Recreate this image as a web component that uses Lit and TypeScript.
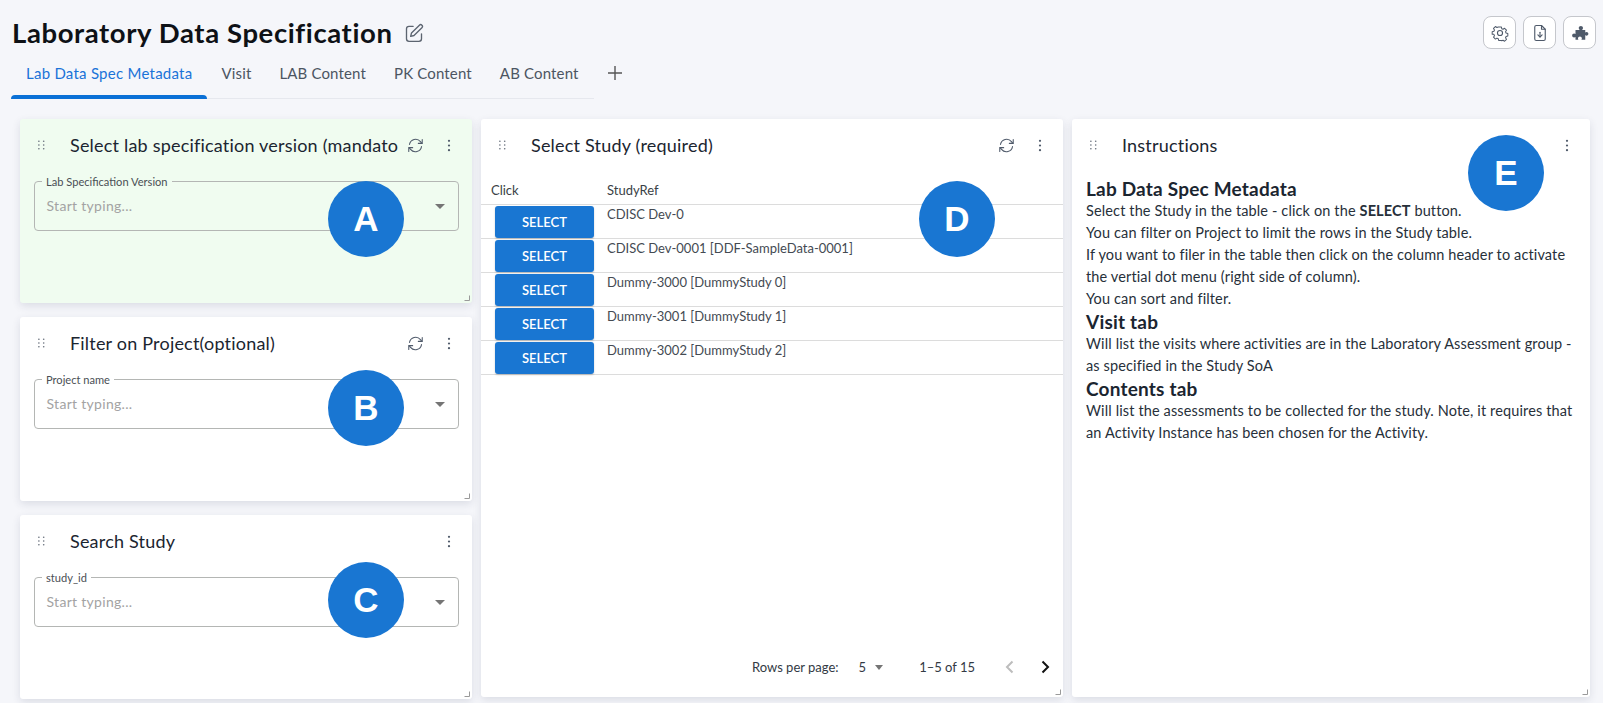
import { LitElement, html, css } from "lit";
import { customElement } from "lit/decorators.js";

const refreshIcon = html`<svg class="ic16" viewBox="0 0 24 24" fill="none" stroke="currentColor" stroke-width="1.5" stroke-linecap="round" stroke-linejoin="round"><path d="M3.5 10.5A8.8 8.8 0 0 1 19 6.5l2 2.5"/><path d="M21.5 3.5V9h-5.5"/><path d="M20.5 13.5A8.8 8.8 0 0 1 5 17.5L3 15"/><path d="M2.5 20.5V15H8"/></svg>`;
const dotsIcon = html`<svg class="dots" viewBox="0 0 4 14"><circle cx="2" cy="2" r="1.2"/><circle cx="2" cy="7" r="1.2"/><circle cx="2" cy="12" r="1.2"/></svg>`;
const dragIcon = html`<svg class="drag" viewBox="0 0 8 11"><circle cx="1" cy="1.2" r="0.95"/><circle cx="6.5" cy="1.2" r="0.95"/><circle cx="1" cy="5.5" r="0.95"/><circle cx="6.5" cy="5.5" r="0.95"/><circle cx="1" cy="9.8" r="0.95"/><circle cx="6.5" cy="9.8" r="0.95"/></svg>`;
const corner = html`<svg class="corner" viewBox="0 0 6 6"><path d="M5.5 0.5V5.5H0.5" fill="none" stroke="#9a9a9a" stroke-width="1"/></svg>`;

@customElement("app-root")
export class AppRoot extends LitElement {
  static styles = css`
    :host { display: block; }
    * { box-sizing: border-box; }
    .page { position: relative; height: 703px; overflow: hidden; background: #f5f6fa; font-family: "Lato", "Noto Sans", sans-serif; color: #1b2530; }
    .top { display: flex; justify-content: space-between; align-items: center; padding: 16px 7px 2px 12px; height: 51px; }
    .titlewrap { display: flex; align-items: center; gap: 11px; }
    h1 { margin: 0; font-size: 27.5px; font-weight: 700; color: #0e1116; letter-spacing: 0.6px; }
    .edit { width: 20px; height: 20px; color: #5c6470; }
    .btns { display: flex; gap: 7px; }
    .ibtn { width: 33px; height: 33px; background: #fff; border: 1px solid #c5c7cc; border-radius: 8px; display: flex; align-items: center; justify-content: center; color: #4f5a6a; }
    .ibtn svg { width: 18px; height: 18px; }
    .tabsrow { display: flex; align-items: flex-start; margin-left: 11px; height: 48px; }
    .tabs { display: flex; width: 583px; height: 48px; border-bottom: 1px solid #e6e8ee; }
    .tab { position: relative; height: 47px; padding: 11px 14px 0; font-size: 15px; letter-spacing: 0.15px; line-height: 22px; color: #4c5562; white-space: nowrap; }
    .tab.on { color: #1a73d8; padding: 11px 15px 0; letter-spacing: 0.25px; }
    .tab.on::after { content: ""; position: absolute; left: 0; right: 0; bottom: -1px; height: 4px; background: #0a70d6; border-radius: 4px 4px 0 0; }
    .plus { width: 16px; height: 16px; margin: 14px 0 0 13px; color: #555; }
    .grid { display: grid; grid-template-columns: 452px 582px 518px; column-gap: 9px; padding: 20px 0 0 20px; }
    .col { display: flex; flex-direction: column; gap: 14px; }
    .card { position: relative; background: #fff; border-radius: 3px; box-shadow: 0 3px 8px rgba(30,40,70,0.12); }
    .small { height: 184px; }
    .green { background: #f0fcf0; }
    .tall { height: 578px; display: flex; flex-direction: column; }
    .head { display: flex; align-items: center; height: 52px; padding: 0 0 0 18px; }
    .drag { width: 7px; height: 10px; fill: #68707c; flex: none; }
    .ct { margin-left: 25px; flex: 1; min-width: 0; font-size: 18px; color: #1b2530; white-space: nowrap; overflow: hidden; letter-spacing: 0.2px; }
    .ic16 { width: 17px; height: 17px; color: #4f5a6a; flex: none; margin-left: 9px; }
    .dots { width: 4px; height: 13px; fill: #4f5a6a; flex: none; margin: 0 21px 0 23px; }
    .corner { position: absolute; right: 2px; bottom: 2px; width: 6px; height: 6px; }
    .field { position: relative; margin: 10px 13px 0 14px; height: 50px; border: 1px solid #b4b6b4; border-radius: 4px; }
    .lbl { position: absolute; left: 7px; top: -7px; padding: 0 4px; font-size: 11.1px; line-height: 13px; color: #4a4f55; }
    .green .lbl { background: #f0fcf0; }
    .white .lbl { background: #fff; }
    .ph { position: absolute; left: 11.5px; top: 14px; font-size: 14px; line-height: 20px; color: #a3a3a3; letter-spacing: 0.3px; }
    .arrow { position: absolute; right: 13px; top: 22px; width: 0; height: 0; border-left: 5px solid transparent; border-right: 5px solid transparent; border-top: 5px solid #757575; }
    .thead { display: flex; height: 31px; margin-top: 3px; border-bottom: 1px solid #dcdcdc; font-size: 13px; color: #3a3f46; align-items: flex-start; padding-top: 8px; }
    .c1 { width: 126px; padding-left: 10px; flex: none; }
    .row { display: flex; height: 34px; border-bottom: 1px solid #dcdcdc; font-size: 13px; color: #444a52; }
    .sel { margin: 1px 0 0 14px; width: 99px; height: 32px; border-radius: 3px; border: 0; background: #1976d2; color: #fff; font: 600 13px "Lato", sans-serif; flex: none; display: flex; align-items: center; justify-content: center; box-shadow: 0 1px 2px rgba(0,0,0,0.2); }
    .rowtxt { margin-left: 13px; padding-top: 0; line-height: 18px; }
    .foot { margin-top: auto; height: 60px; display: flex; align-items: center; font-size: 13px; color: #333a44; padding-left: 271px; }
    .f5 { margin-left: 20px; display: flex; align-items: center; gap: 9px; }
    .f5 i { display: block; border-left: 4.5px solid transparent; border-right: 4.5px solid transparent; border-top: 5px solid #757575; }
    .frange { margin-left: 36px; }
    .chev { width: 9px; height: 14px; fill: none; stroke-width: 2; flex: none; }
    .prev { margin-left: 30px; }
    .next { margin-left: 27px; }
    .instr { padding: 6px 14px 0; font-size: 14.5px; letter-spacing: 0.13px; line-height: 22px; color: #27303a; }
    .instr h3 { margin: 0; font-size: 19px; letter-spacing: 0.2px; line-height: 23px; font-weight: 700; color: #1b2530; }
    .instr p { margin: 0; }
    .badge { position: absolute; width: 76px; height: 76px; border-radius: 50%; background: #1976d2; color: #fff; font: 700 35px "Liberation Sans", Arial, sans-serif; display: flex; align-items: center; justify-content: center; }
    .a { left: 328px; top: 181px; } .b { left: 328px; top: 370px; } .cc { left: 328px; top: 562px; } .d { left: 919px; top: 181px; } .e { left: 1468px; top: 135px; }
  `;

  head(title: string, refresh: boolean) {
    return html`<div class="head">${dragIcon}<div class="ct">${title}</div>${refresh ? refreshIcon : ""}${dotsIcon}</div>`;
  }

  field(label: string) {
    return html`<div class="field"><span class="lbl">${label}</span><span class="ph">Start typing...</span><span class="arrow"></span></div>`;
  }

  render() {
    const rows = ["CDISC Dev-0", "CDISC Dev-0001 [DDF-SampleData-0001]", "Dummy-3000 [DummyStudy 0]", "Dummy-3001 [DummyStudy 1]", "Dummy-3002 [DummyStudy 2]"];
    return html`<div class="page">
      <div class="top">
        <div class="titlewrap"><h1>Laboratory Data Specification</h1>
          <svg class="edit" viewBox="0 0 24 24" fill="none" stroke="currentColor" stroke-width="1.6" stroke-linecap="round" stroke-linejoin="round"><path d="M11 4H6a3 3 0 0 0-3 3v12a3 3 0 0 0 3 3h12a3 3 0 0 0 3-3v-6"/><path d="M18.5 2.6a2.1 2.1 0 0 1 3 3L12 15l-4 1 1-4z"/></svg>
        </div>
        <div class="btns">
          <div class="ibtn"><svg viewBox="0 0 24 24" fill="none" stroke="currentColor" stroke-width="1.5" stroke-linejoin="round"><path d="M10 3h4l.6 2.6 1.9.8 2.3-1.4 2.8 2.8-1.4 2.3.8 1.9 2.6.6v4l-2.6.6-.8 1.9 1.4 2.3-2.8 2.8-2.3-1.4-1.9.8L14 23h-4l-.6-2.6-1.9-.8-2.3 1.4-2.8-2.8 1.4-2.3-.8-1.9L.4 14v-4l2.6-.6.8-1.9L2.4 5.2l2.8-2.8 2.3 1.4 1.9-.8z" transform="translate(1.2 1.2) scale(.9)"/><circle cx="12" cy="12" r="3.4"/></svg></div>
          <div class="ibtn"><svg viewBox="0 0 24 24" fill="none" stroke="currentColor" stroke-width="1.5" stroke-linecap="round" stroke-linejoin="round"><path d="M14 2H7a2 2 0 0 0-2 2v16a2 2 0 0 0 2 2h10a2 2 0 0 0 2-2V7z"/><path d="M14 2v5h5"/><path d="M12 11v6"/><path d="M9.2 14.5 12 17.4l2.8-2.9"/></svg></div>
          <div class="ibtn"><svg viewBox="0 0 24 24" fill="currentColor"><path d="M6 8h5.6c-.8-.7-1.3-1.6-1.3-2.6C10.300 3.800 11.600 2.600 13.200 2.600S16 3.800 16 5.400c0 1-.5 1.900-1.300 2.600H19v3.200c.5-.4 1.100-.7 1.700-.7 1.400 0 2.500 1.100 2.500 2.500s-1.100 2.500-2.500 2.500c-.6 0-1.200-.3-1.700-.7V21h-5.300c.5-.5.800-1.100.8-1.800 0-1.400-1.200-2.500-2.600-2.500s-2.600 1.100-2.600 2.500c0 .7.300 1.300.8 1.800H6v-3.800c-.5.4-1.100.7-1.800.7-1.500 0-2.700-1.200-2.700-2.700s1.200-2.700 2.700-2.700c.7 0 1.300.3 1.800.7z"/></svg></div>
        </div>
      </div>
      <div class="tabsrow">
        <div class="tabs">
          <div class="tab on">Lab Data Spec Metadata</div><div class="tab">Visit</div><div class="tab">LAB Content</div><div class="tab">PK Content</div><div class="tab">AB Content</div>
        </div>
        <svg class="plus" viewBox="0 0 16 16" stroke="currentColor" stroke-width="1.4"><path d="M8 1v14M1 8h14"/></svg>
      </div>
      <div class="grid">
        <div class="col">
          <div class="card small green">${this.head("Select lab specification version (mandatory)", true)}${this.field("Lab Specification Version")}${corner}</div>
          <div class="card small white">${this.head("Filter on Project(optional)", true)}${this.field("Project name")}${corner}</div>
          <div class="card small white">${this.head("Search Study", false)}${this.field("study_id")}${corner}</div>
        </div>
        <div class="card tall">
          ${this.head("Select Study (required)", true)}
          <div class="thead"><div class="c1">Click</div><div>StudyRef</div></div>
          ${rows.map((r) => html`<div class="row"><div class="sel">SELECT</div><div class="rowtxt">${r}</div></div>`)}
          <div class="foot">
            <span>Rows per page:</span>
            <span class="f5">5 <i></i></span>
            <span class="frange">1–5 of 15</span>
            <svg class="chev prev" viewBox="0 0 9 14" stroke="#bdbdbd"><path d="M7.5 1.5 2 7l5.5 5.5"/></svg>
            <svg class="chev next" viewBox="0 0 9 14" stroke="#111"><path d="M1.5 1.5 7 7l-5.5 5.5"/></svg>
          </div>
          ${corner}
        </div>
        <div class="card tall">
          ${this.head("Instructions", false)}
          <div class="instr">
            <h3>Lab Data Spec Metadata</h3>
            <p>Select the Study in the table - click on the <b>SELECT</b> button.<br>You can filter on Project to limit the rows in the Study table.<br>If you want to filer in the table then click on the column header to activate the vertial dot menu (right side of column).<br>You can sort and filter.</p>
            <h3>Visit tab</h3>
            <p>Will list the visits where activities are in the Laboratory Assessment group - as specified in the Study SoA</p>
            <h3>Contents tab</h3>
            <p>Will list the assessments to be collected for the study. Note, it requires that an Activity Instance has been chosen for the Activity.</p>
          </div>
          ${corner}
        </div>
      </div>
      <div class="badge a">A</div><div class="badge b">B</div><div class="badge cc">C</div><div class="badge d">D</div><div class="badge e">E</div>
    </div>`;
  }
}
